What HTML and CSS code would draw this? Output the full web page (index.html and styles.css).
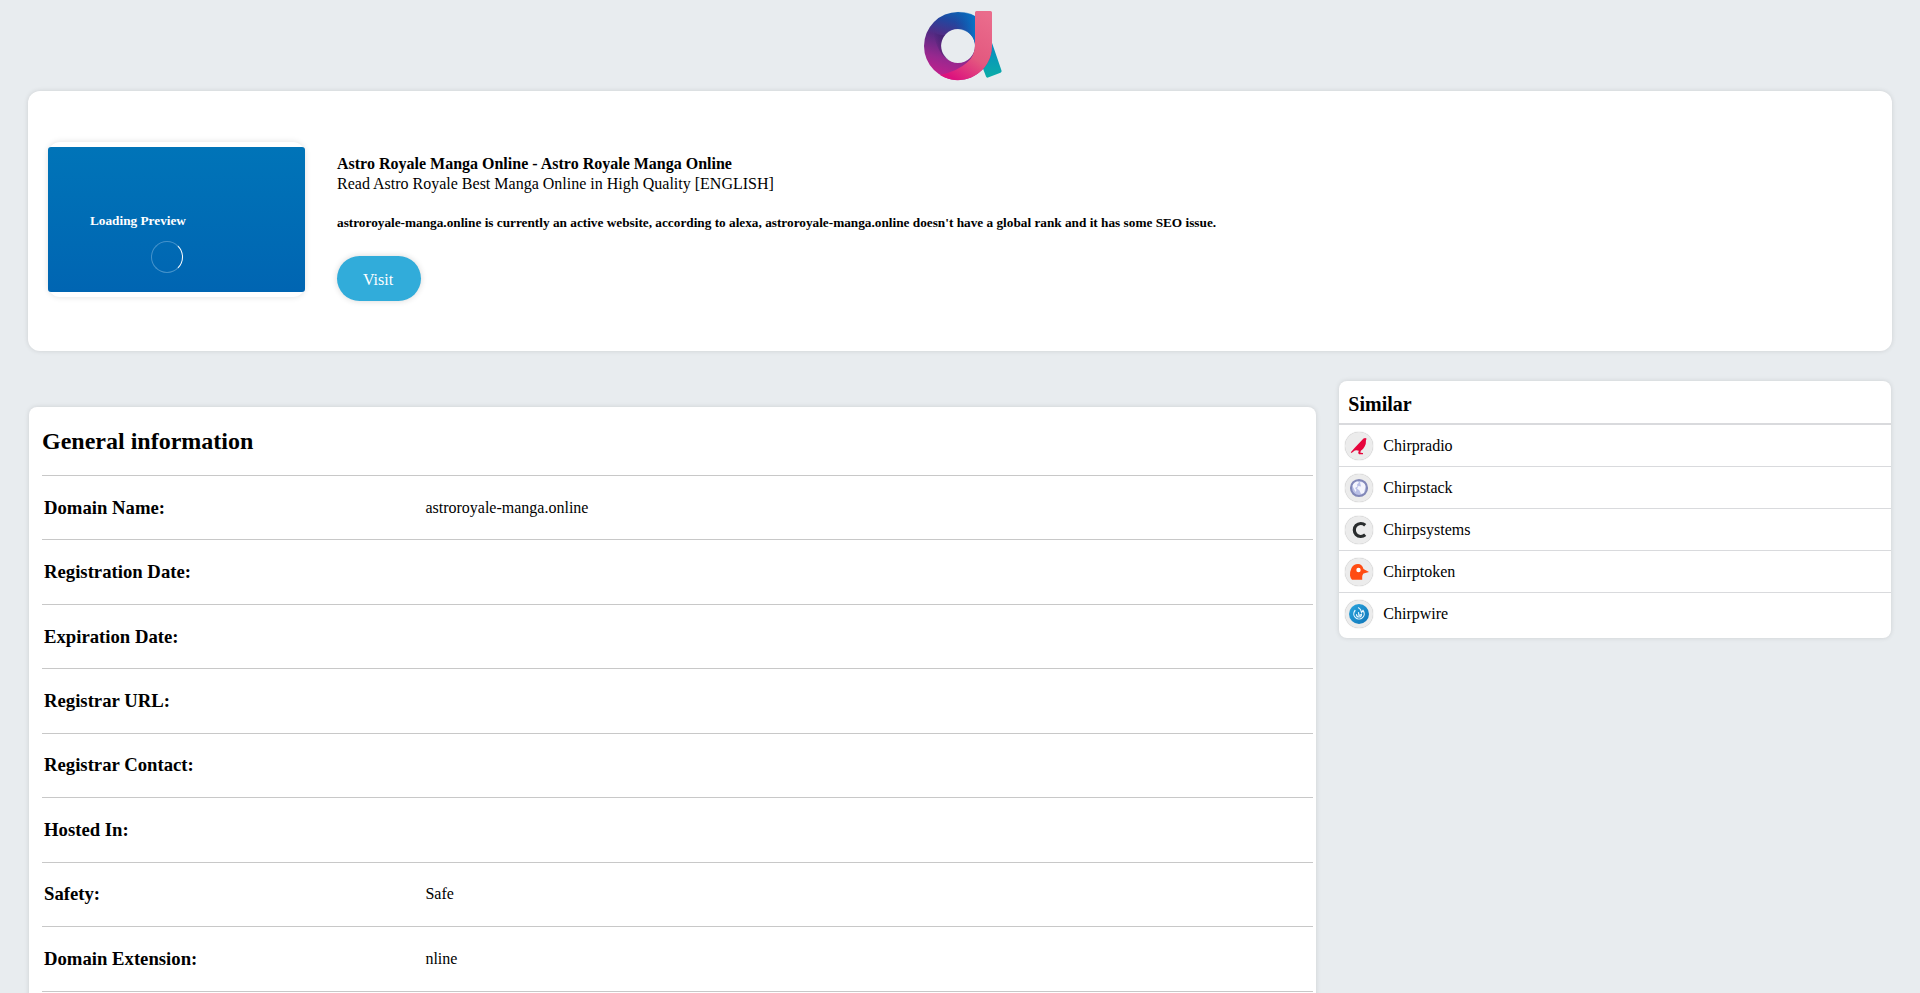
FILE: index.html
```html
<!DOCTYPE html>
<html lang="en">
<head>
<meta charset="utf-8">
<title>Astro Royale Manga Online</title>
<link rel="stylesheet" href="styles.css">
</head>
<body>
<header class="site-header">
  <svg class="logo" viewBox="22 9 82 74" role="img" aria-label="Logo">
    <defs>
      <linearGradient id="ring" x1="0.7" y1="0" x2="0.4" y2="1">
        <stop offset="0" stop-color="#0868b8"/>
        <stop offset="0.2" stop-color="#2047a0"/>
        <stop offset="0.45" stop-color="#552a83"/>
        <stop offset="0.75" stop-color="#98288f"/>
        <stop offset="1" stop-color="#c4208c"/>
      </linearGradient>
      <linearGradient id="shade" x1="0" y1="0.5" x2="1" y2="0.5">
        <stop offset="0" stop-color="#341c66" stop-opacity="0"/>
        <stop offset="1" stop-color="#341c66" stop-opacity="0.8"/>
      </linearGradient>
      <linearGradient id="blue" x1="0" y1="0.5" x2="1" y2="0.5">
        <stop offset="0" stop-color="#0b5cb2" stop-opacity="0"/>
        <stop offset="1" stop-color="#0874c6"/>
      </linearGradient>
      <linearGradient id="stem" x1="0.8" y1="0" x2="0.3" y2="1">
        <stop offset="0" stop-color="#ea6c8c"/>
        <stop offset="0.6" stop-color="#e3587f"/>
        <stop offset="1" stop-color="#dc127e"/>
      </linearGradient>
      <linearGradient id="tail" x1="0.5" y1="0" x2="0.5" y2="1">
        <stop offset="0" stop-color="#0788c4"/>
        <stop offset="1" stop-color="#0bada8"/>
      </linearGradient>
    </defs>
    <path fill="url(#tail)" d="M91 40 L101.500 70.500 Q102 72 100.500 72.700 L88 77.500 Q86.500 78 86 76.500 L82 66 Z"/>
    <path fill="url(#ring)" fill-rule="evenodd" d="M58 12a34 34 0 1 0 0 68a34 34 0 1 0 0-68zM58 29a17 17 0 1 1 0 34a17 17 0 1 1 0-34z"/>
    <path fill="url(#shade)" d="M33 32 Q41 36 45 35 A17 17 0 0 0 49 60 Q38 55 33 32z"/>
    <path fill="url(#blue)" d="M55 12 Q66 11 75 16 V44 Q73 30 55 29z"/>
    <path fill="url(#stem)" d="M76.500 11 H90.500 Q92 11 92 12.500 V46 A34 34 0 0 1 40 75 Q58 71 67 62.500 Q75 56 75 45 V12.500 Q75 11 76.500 11z"/>
  </svg>
</header>
<main class="page">
  <section class="card hero">
    <div class="preview">
      <div class="preview-screen">
        <strong class="preview-label">Loading Preview</strong>
        <span class="spinner"></span>
      </div>
    </div>
    <div class="summary">
      <h1 class="site-title">Astro Royale Manga Online - Astro Royale Manga Online</h1>
      <p class="site-text">Read Astro Royale Best Manga Online in High Quality [ENGLISH]</p>
      <h2 class="site-status">astroroyale-manga.online is currently an active website, according to alexa, astroroyale-manga.online doesn't have a global rank and it has some SEO issue.</h2>
      <a class="visit" href="#">Visit</a>
    </div>
  </section>
  <div class="columns">
    <section class="card general">
      <h2 class="general-title">General information</h2>
      <table class="facts">
        <tr><th scope="row"><h3>Domain Name:</h3></th><td>astroroyale-manga.online</td></tr>
        <tr><th scope="row"><h3>Registration Date:</h3></th><td></td></tr>
        <tr><th scope="row"><h3>Expiration Date:</h3></th><td></td></tr>
        <tr><th scope="row"><h3>Registrar URL:</h3></th><td></td></tr>
        <tr><th scope="row"><h3>Registrar Contact:</h3></th><td></td></tr>
        <tr><th scope="row"><h3>Hosted In:</h3></th><td></td></tr>
        <tr><th scope="row"><h3>Safety:</h3></th><td>Safe</td></tr>
        <tr><th scope="row"><h3>Domain Extension:</h3></th><td>nline</td></tr>
      </table>
    </section>
    <aside class="card similar">
      <h2 class="similar-title">Similar</h2>
      <ul class="similar-list">
        <li><a class="similar-link" href="#">
          <svg class="site-icon" viewBox="0 0 28 28" aria-hidden="true"><path fill="#e6053c" d="M18.500 6.600q2-1.200 3.200.4l-.7.700q.3 4.200-1.500 7-1.500 3-3.700 4.100l-.5 1.900 2.700.3v1.300h-4v-.9h-1l.8-2.600q-2-.8-4-.2L6.500 21l-.7-.7L10 15.500z"/></svg>
          Chirpradio</a></li>
        <li><a class="similar-link" href="#">
          <svg class="site-icon" viewBox="0 0 28 28" aria-hidden="true"><circle cx="14" cy="14" r="8" fill="#b9bfe6" stroke="#8288b8" stroke-width="2.200"/><path fill="#f4f5fd" d="M7.500 12q1-4 5-4.500l1.500 1-2 2 .5 2-2.500 1.500 1.500 2-1 2zM15 8q5 0 5.500 4.500L19 19l-3 1-1.500-3.500-2.500-2 1.500-2.500 2.500.500-.5-2z"/></svg>
          Chirpstack</a></li>
        <li><a class="similar-link" href="#">
          <svg class="site-icon" viewBox="0 0 28 28" aria-hidden="true"><path fill="none" stroke="#292c2d" stroke-width="3.200" d="M20.200 9.200A6.500 6.500 0 1 0 20.200 18.800"/></svg>
          Chirpsystems</a></li>
        <li><a class="similar-link" href="#">
          <svg class="site-icon" viewBox="0 0 28 28" aria-hidden="true"><path fill="#ff4c12" d="M7 21.800Q5.500 20.500 5 17.500 4.800 13.500 6.500 10 8.500 6 13 6q4 0 5.500 5l5.500 3-5.500 1.500q-1.500 1.500-1.300 3.500v2.800z"/><circle cx="13.500" cy="12" r="2.200" fill="#fff"/></svg>
          Chirptoken</a></li>
        <li><a class="similar-link" href="#">
          <svg class="site-icon" viewBox="0 0 28 28" aria-hidden="true"><defs><linearGradient id="wire" x1="0" y1="0" x2="1" y2="1"><stop offset="0" stop-color="#2aa5de"/><stop offset="1" stop-color="#0f75b8"/></linearGradient></defs><circle cx="14" cy="14" r="10" fill="url(#wire)"/><g fill="none" stroke="#e9f7ff" stroke-width="1.200" stroke-linecap="round"><path d="M10 10.500A5.200 5.200 0 1 0 18 10.500L16.500 12.300Q16 9 13.500 7.800"/><path d="M11.500 14.500A2.500 2.500 0 0 0 16.500 14.500L14 15.500L13.500 12.500"/></g></svg>
          Chirpwire</a></li>
      </ul>
    </aside>
  </div>
</main>
</body>
</html>
```
FILE: styles.css
```css
body {
  margin: 0;
  background: #e8ecef;
  color: #000;
  font-family: "Liberation Serif", "Times New Roman", serif;
  font-size: 16px;
}

.site-header {
  display: flex;
  justify-content: center;
  padding: 9px 0 8px;
}

.logo {
  width: 82px;
  height: 74px;
  padding-left: 6px;
}

.page {
  padding: 0 28px;
}

.card {
  background: #fff;
  border-radius: 8px;
  box-shadow: 0 0 5px rgba(0, 0, 0, 0.12);
}

.hero {
  display: flex;
  align-items: flex-start;
  gap: 32px;
  padding: 51px 20px 50px;
  border-radius: 12px;
}

.preview {
  flex: none;
  width: 257px;
  box-sizing: border-box;
  padding: 5px 0;
  border-radius: 12px;
  box-shadow: 0 0 6px rgba(0, 0, 0, 0.12);
}

.preview-screen {
  display: flex;
  flex-direction: column;
  align-items: flex-start;
  gap: 12px;
  padding: 66px 42px 19px;
  border-radius: 3px;
  background: linear-gradient(#0074b8, #0065b2);
}

.preview-label {
  color: #fff;
  font-size: 0.83em;
  line-height: 16px;
}

.spinner {
  box-sizing: border-box;
  width: 32px;
  height: 32px;
  margin-left: 61px;
  border: 1px solid #4593cb;
  border-right-color: #fff;
  border-radius: 50%;
}

.summary {
  padding-top: 12px;
}

.site-title {
  margin: 0;
  font-size: 16px;
  line-height: 20px;
}

.site-text {
  margin: 0;
  line-height: 20px;
}

.site-status {
  margin: 20px 0 24px;
  font-size: 0.83em;
  line-height: 18px;
}

.visit {
  display: inline-block;
  padding: 2px 28px 0 26px;
  border-radius: 23px;
  background: #31acda;
  box-shadow: 0 0 6px rgba(0, 0, 0, 0.16);
  color: #fff;
  line-height: 43px;
  text-decoration: none;
}

.columns {
  display: grid;
  grid-template-columns: 7fr 3fr;
  gap: 23px;
  align-items: start;
  padding: 30px 1px 0;
}

.general {
  margin-top: 26px;
  padding: 20px 3px 20px 13px;
}

.general-title {
  margin: 0;
  padding-bottom: 20px;
  font-size: 24px;
  line-height: 28px;
}

.facts {
  width: 100%;
  border-collapse: collapse;
  border-top: 1px solid #c8c8c8;
}

.facts tr {
  border-bottom: 1px solid #c8c8c8;
}

.facts th {
  width: 30%;
  padding: 2px;
  text-align: left;
}

.facts td {
  padding: 2px;
}

.similar {
  padding-bottom: 4px;
}

.similar-title {
  margin: 0;
  padding: 11px 9px 7px;
  border-bottom: 2px solid #d9dadd;
  font-size: 20px;
  line-height: 24px;
}

.similar-list {
  margin: 0;
  padding: 0;
  list-style: none;
}

.similar-list li + li {
  border-top: 1px solid #d9dadd;
}

.similar-link {
  display: flex;
  align-items: center;
  gap: 10px;
  padding: 7px 6px 6px;
  color: #000;
  line-height: 20px;
  text-decoration: none;
}

.site-icon {
  width: 28px;
  height: 28px;
  border-radius: 50%;
  background: #ececec;
  box-shadow: 0 0 1px rgba(0, 0, 0, 0.4);
}
```
